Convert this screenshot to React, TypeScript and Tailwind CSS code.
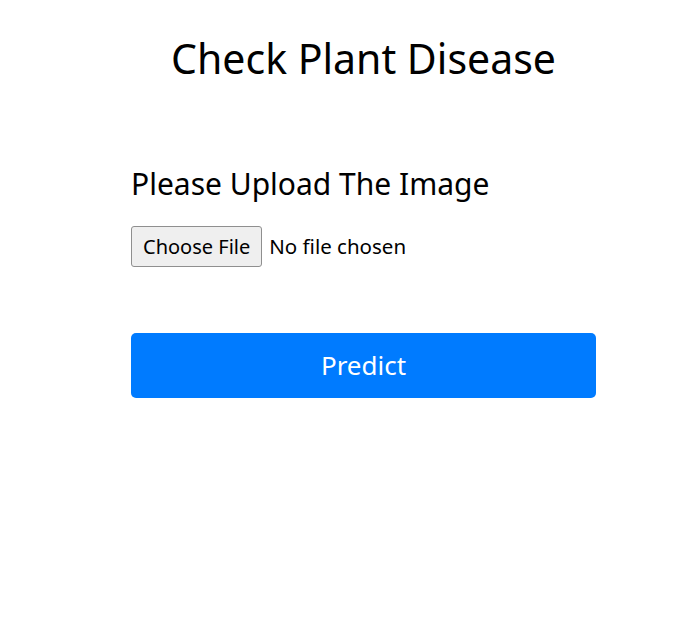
export default function App() {
  return (
    <div className="min-h-[620px] bg-white text-black" style={{ fontFamily: '"Noto Sans", sans-serif' }}>
      <div className="ml-[131px] w-[465px] pt-[30px]">
        <h1 className="text-center text-[41px] leading-[56px]">Check Plant Disease</h1>
        <h2 className="mt-[78px] text-[30px] leading-[40px]">Please Upload The Image</h2>
        <div className="mt-[22px] flex items-center gap-[7px]">
          <button className="h-[41px] rounded-[3px] border border-[#8f8f8f] bg-[#efefef] px-[11px] text-[20px] text-black">
            Choose File
          </button>
          <span className="text-[20.5px]">No file chosen</span>
        </div>
        <button className="mt-[66px] h-[65px] w-full rounded-[5px] bg-[#007bff] text-[26px] text-white">
          Predict
        </button>
      </div>
    </div>
  )
}
